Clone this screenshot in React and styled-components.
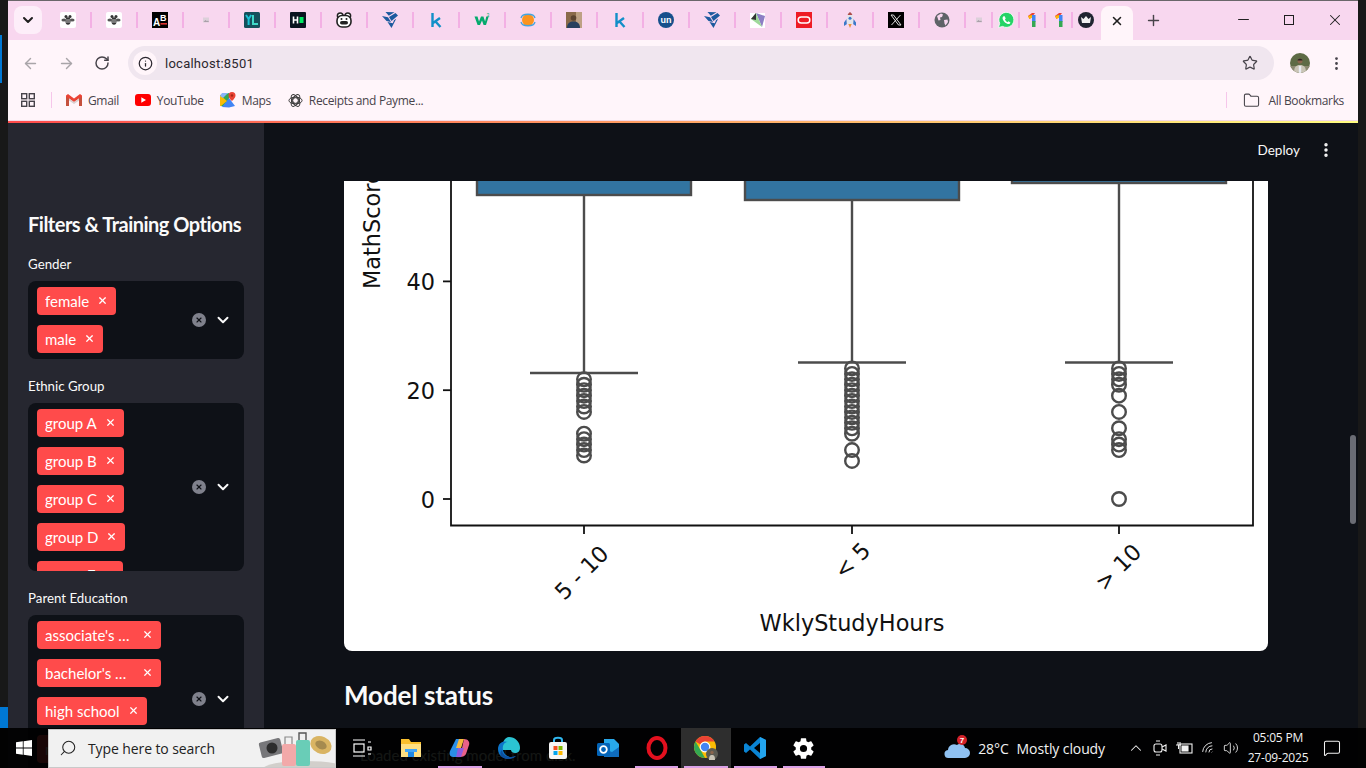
import { Fragment } from 'react'
import styled, { createGlobalStyle } from 'styled-components'
import { ArrowLeft, ArrowRight, RotateCw, Info, Star, EllipsisVertical, X, Plus, ChevronDown, ChevronUp, Search, Folder, Minus, MessageSquare, Volume2, Wifi } from 'lucide-react'
import { IoSettingsSharp } from 'react-icons/io5'

const GlobalStyle = createGlobalStyle`
    html, body {
        margin: 0;
        padding: 0;
        background: #141414;
        overflow: hidden;
    }
    * {
        box-sizing: border-box;
    }
`

const Desktop = styled.div`
    position: relative;
    display: flex;
    width: 1366px;
    height: 768px;
    overflow: hidden;
    background: #181818;
`

const DesktopEdge = styled.div`
    display: flex;
    flex-direction: column;
    justify-content: space-between;
    width: 8px;
    height: 728px;
    padding-top: 35px;
`

const EdgeMarkTop = styled.div`
    width: 2px;
    height: 48px;
    background: #0078d4;
`

const EdgeMarkBottom = styled.div`
    width: 8px;
    height: 21px;
    background: #0078d4;
`

const Window = styled.div`
    display: flex;
    flex-direction: column;
    width: 1350px;
    height: 768px;
`

const TabStrip = styled.div`
    display: flex;
    align-items: center;
    height: 40px;
    padding: 0 0 0 6px;
    background: #f8d7ef;
    border-top: 1px solid #6a666a;
`

const TabListButton = styled.div`
    display: flex;
    align-items: center;
    justify-content: center;
    width: 28px;
    height: 28px;
    margin: -2px 4px 0 0;
    border-radius: 8px;
    background: #fdeef9;
    color: #1f1f1f;
`

const PinnedTab = styled.div`
    display: flex;
    align-items: center;
    justify-content: center;
    flex: none;
    width: ${p => p.$width}px;
    height: 32px;
    margin-top: -2px;
`

const TabDivider = styled.div`
    flex: none;
    width: 2px;
    height: 16px;
    margin-top: -2px;
    background: #f3b0e4;
`

const ActiveTab = styled.div`
    display: flex;
    align-items: center;
    justify-content: center;
    width: 32px;
    height: 34px;
    margin: 5px 0 0 3px;
    padding-bottom: 5px;
    border-radius: 8px 8px 0 0;
    background: #fff5fa;
    color: #1f1f1f;
`

const NewTab = styled.div`
    display: flex;
    align-items: center;
    justify-content: center;
    width: 40px;
    color: #47434a;
`

const WindowControls = styled.div`
    display: flex;
    margin-left: auto;
    margin-top: -2px;
`

const WindowControl = styled.div`
    display: flex;
    align-items: center;
    justify-content: center;
    width: 46px;
    height: 30px;
    color: #1f1f1f;
`

const MaximizeBox = styled.div`
    width: 10px;
    height: 10px;
    border: 1px solid #1f1f1f;
`

const Toolbar = styled.div`
    display: flex;
    align-items: center;
    height: 40px;
    padding: 6px 0 0 4px;
    background: #fff5fa;
`

const NavButton = styled.div`
    display: flex;
    align-items: center;
    justify-content: center;
    width: 36px;
    height: 34px;
    margin-left: ${p => p.$shift || 0}px;
    color: ${p => (p.$off ? '#a9a5a9' : '#47434a')};
`

const Omnibox = styled.div`
    display: flex;
    align-items: center;
    width: 1146px;
    height: 34px;
    margin-left: 8px;
    padding: 0 16px 0 5px;
    border-radius: 17px;
    background: #f0e6ef;
`

const SiteInfo = styled.div`
    display: flex;
    align-items: center;
    justify-content: center;
    width: 24px;
    height: 24px;
    border-radius: 50%;
    background: #fff5fa;
    color: #2c2830;
`

const Address = styled.span`
    flex: 1;
    margin-left: 8px;
    font: 13px 'Roboto', sans-serif;
    letter-spacing: 0.25px;
    color: #2b272e;
`

const Avatar = styled.div`
    width: 20px;
    height: 20px;
    margin-left: 16px;
    border-radius: 50%;
    overflow: hidden;
`

const BookmarksBar = styled.div`
    display: flex;
    align-items: center;
    height: 40px;
    padding: 0 14px 0 13px;
    background: #fff5fa;
`

const BarDivider = styled.div`
    width: 1px;
    height: 16px;
    background: #f6c6ea;
    margin: ${p => p.$margin};
`

const Bookmark = styled.div`
    display: flex;
    align-items: center;
    gap: ${p => p.$gap || 6}px;
    margin-right: ${p => p.$after}px;
    font: 12px 'Open Sans', sans-serif;
    letter-spacing: -0.35px;
    color: #47434a;
    white-space: nowrap;
`

const PageLine = styled.div`
    flex: none;
    height: 3px;
    border-top: 1px solid #f2d9e6;
    background-clip: content-box;
    background-image: linear-gradient(90deg, #ff4b4b, #fffd80);
`

const AppFrame = styled.div`
    display: flex;
    flex: 1;
    min-height: 0;
`

const Sidebar = styled.aside`
    flex: none;
    width: 256px;
    padding: 89px 20px 0;
    background: #262730;
    overflow: hidden;
    font-family: 'Lato', sans-serif;
    color: #fafafa;
`

const SidebarTitle = styled.h2`
    margin: 0 0 19px;
    font-size: 20px;
    line-height: 24px;
    font-weight: 700;
    letter-spacing: -0.5px;
    white-space: nowrap;
`

const FilterLabel = styled.div`
    height: 18px;
    margin-bottom: 8px;
    font-size: 13.3px;
    line-height: 18px;
`

const SelectBox = styled.div`
    display: flex;
    align-items: center;
    max-height: 168px;
    margin-bottom: 18px;
    border-radius: 8px;
    background: #0e1117;
    overflow: hidden;
`

const TagList = styled.div`
    display: flex;
    flex: 1;
    flex-direction: column;
    align-items: flex-start;
    align-self: flex-start;
    gap: 10px;
    padding: 6px 9px;
`

const Tag = styled.span`
    display: flex;
    flex: none;
    align-items: center;
    gap: 8px;
    height: 28px;
    padding: 0 8px 1px;
    border-radius: 4px;
    background: #ff4b4b;
    font-size: 15px;
    color: #fff;
`

const TagText = styled.span`
    max-width: 89px;
    overflow: hidden;
    white-space: nowrap;
    text-overflow: ellipsis;
`

const SelectControls = styled.div`
    display: flex;
    flex: none;
    align-items: center;
    gap: 8px;
    padding-right: 12px;
    color: #fafafa;
`

const ClearBadge = styled.div`
    display: flex;
    align-items: center;
    justify-content: center;
    width: 14px;
    height: 14px;
    border-radius: 50%;
    background: #7f818c;
    color: #0e1117;
`

const Main = styled.main`
    position: relative;
    display: flex;
    flex: 1;
    flex-direction: column;
    min-width: 0;
    background: #0e1117;
    overflow: hidden;
    font-family: 'Lato', sans-serif;
    color: #fafafa;
`

const AppHeader = styled.header`
    display: flex;
    flex: none;
    align-items: center;
    justify-content: flex-end;
    gap: 17px;
    height: 58px;
    padding: 0 23px 4px 0;
    font-size: 13.5px;
`

const Content = styled.div`
    padding: 0 90px 0 80px;
`

const ChartCard = styled.div`
    height: 470px;
    border-radius: 0 0 8px 8px;
    background: #fff;
    overflow: hidden;
`

const ChartSvg = styled.svg`
    display: block;
    width: 924px;
    height: 470px;
    font-family: 'DejaVu Sans', sans-serif;
`

const SectionTitle = styled.h3`
    margin: 27px 0 26px;
    font-size: 26px;
    line-height: 34px;
    font-weight: 700;
    letter-spacing: -0.1px;
`

const StatusBox = styled.div`
    padding: 8px 16px;
    font-size: 15px;
    color: #c9dccc;
`

const ScrollThumb = styled.div`
    position: absolute;
    top: 312px;
    right: 2px;
    width: 6px;
    height: 89px;
    border-radius: 3px;
    background: #6a6c74;
`

const Taskbar = styled.footer`
    position: absolute;
    left: 0;
    right: 0;
    bottom: 0;
    display: flex;
    align-items: center;
    height: 40px;
    background: rgba(0, 0, 0, 0.9);
    color: #fff;
    font: 13px 'Open Sans', sans-serif;
`

const StartButton = styled.div`
    display: flex;
    align-items: center;
    justify-content: center;
    flex: none;
    width: 48px;
    height: 40px;
`

const SearchBox = styled.div`
    position: relative;
    display: flex;
    align-items: center;
    gap: 11px;
    flex: none;
    width: 288px;
    height: 39px;
    padding-left: 10px;
    background: #f1f1f1;
    border: 1px solid #c9c9c9;
    color: #222;
    font-size: 14px;
    letter-spacing: -0.1px;
    overflow: hidden;
`

const SearchArt = styled.svg`
    position: absolute;
    right: 0;
    top: 0;
`

const TaskIcons = styled.div`
    display: flex;
    flex: none;
    margin-left: 1px;
`

const TaskIcon = styled.div`
    position: relative;
    display: flex;
    align-items: center;
    justify-content: center;
    width: ${p => p.$w || 49.2}px;
    height: 40px;
    background: ${p => (p.$active ? '#2e2e2e' : 'transparent')};
    &::after {
        content: '';
        position: absolute;
        left: 3px;
        right: 3px;
        bottom: 0;
        height: 2px;
        background: ${p => (p.$open ? '#d9a0e6' : 'transparent')};
    }
`

const Tray = styled.div`
    display: flex;
    flex: 1;
    align-items: center;
    justify-content: flex-end;
    height: 40px;
    padding-right: 25px;
    color: #f2f2f2;
`

const WeatherText = styled.span`
    margin: ${p => p.$margin};
    font-size: 14px;
    letter-spacing: -0.1px;
    white-space: nowrap;
`

const TrayIcon = styled.div`
    display: flex;
    align-items: center;
    justify-content: center;
    width: ${p => p.$w || 24}px;
`

const Clock = styled.div`
    width: 70px;
    margin: 0 10px 0 1px;
    font-size: 12px;
    line-height: 20px;
    letter-spacing: -0.2px;
    text-align: center;
`

const tabSlots = ['bee', 'bee', 'ab', 'blank', 'yl', 'hn', 'pig', 'shard', 'k', 'w3', 'orb', 'photo', 'k', 'un', 'shard', 'prism', 'oracle', 'rocket', 'x', 'globe']
const narrowSlots = [['blank', 25], ['wa', 25], ['one', 24], ['one', 25], ['crown', 25]]

function Favicon({ kind }) {
    const box = { width: 16, height: 16, viewBox: '0 0 16 16' }
    switch (kind) {
        case 'bee':
            return (
                <svg {...box}>
                    <rect width="16" height="16" rx="2" fill="#fff" />
                    <circle cx="6" cy="4.500" r="1.500" fill="#333" />
                    <circle cx="10" cy="4.500" r="1.500" fill="#333" />
                    <ellipse cx="4" cy="8" rx="2.600" ry="1.600" fill="#555" />
                    <ellipse cx="12" cy="8" rx="2.600" ry="1.600" fill="#555" />
                    <ellipse cx="8" cy="9" rx="2.600" ry="3.800" fill="#333" />
                    <path d="M5.500 8h5M5.500 10h5" stroke="#fff" strokeWidth=".7" />
                </svg>
            )
        case 'ab':
            return (
                <svg {...box}>
                    <rect width="16" height="16" fill="#000" />
                    <text x="1" y="14" fontSize="10" fontWeight="700" fontFamily="Liberation Sans" fill="#fff">A</text>
                    <text x="8" y="9" fontSize="9" fontWeight="700" fontFamily="Liberation Sans" fill="#fff">B</text>
                    <rect x="8.500" y="11" width="6.500" height="1.600" fill="#e0322f" />
                </svg>
            )
        case 'blank':
            return (
                <svg {...box}>
                    <rect x="5" y="5.500" width="6" height="5" fill="#dcd0da" />
                    <path d="M5.500 10l2-2 1.500 1.200 1-.8 1 1.600z" fill="#a99ea8" />
                </svg>
            )
        case 'yl':
            return (
                <svg {...box}>
                    <rect width="16" height="16" rx="1.500" fill="#14505c" />
                    <path d="M2 3l2.600 4L7.200 3M4.600 7v6" stroke="#19c3d6" strokeWidth="2" fill="none" />
                    <path d="M9 3v9h5" stroke="#3fd9c8" strokeWidth="2" fill="none" />
                </svg>
            )
        case 'hn':
            return (
                <svg {...box}>
                    <rect width="16" height="16" rx="1" fill="#0a1420" />
                    <path d="M3.500 4.500v7M7.500 4.500v7M3.500 8h4" stroke="#fff" strokeWidth="1.600" />
                    <rect x="9.500" y="5" width="4" height="6" fill="#00ea64" />
                </svg>
            )
        case 'pig':
            return (
                <svg {...box}>
                    <circle cx="4.200" cy="3.800" r="2.800" fill="#fff" stroke="#222" strokeWidth="1.500" />
                    <circle cx="11.800" cy="3.800" r="2.800" fill="#fff" stroke="#222" strokeWidth="1.500" />
                    <rect x="1" y="3.500" width="14" height="11.500" rx="5" fill="#fff" stroke="#222" strokeWidth="1.600" />
                    <rect x="4" y="9" width="8" height="3.600" rx="1.800" fill="#222" />
                    <circle cx="5.500" cy="7" r="1" fill="#222" />
                    <circle cx="10.500" cy="7" r="1" fill="#222" />
                </svg>
            )
        case 'shard':
            return (
                <svg {...box}>
                    <path d="M3.500 0L12.500 .3 6.800 3.800zM13.500 1L16 3.500 9.500 9 7 5zM0 4l6 1.200L9 10 4.500 9zM5.500 10l5.300 1.300 1.200-3 2.200-1.500L9.500 16z" fill="#1c5a9e" />
                </svg>
            )
        case 'k':
            return (
                <svg {...box}>
                    <path d="M4.500 1v14M12 6L5 11M7.500 9.500L12.500 15" stroke="#128fc8" strokeWidth="2.400" fill="none" />
                </svg>
            )
        case 'w3':
            return (
                <svg {...box}>
                    <path d="M.5 4.500h3l1.500 5 2-5h2.400l1.700 5 1.200-5h2.400L12 13H9.600L8 8.500 6 13H3.600z" fill="#04aa6d" />
                    <text x="12.800" y="4.500" fontSize="4.500" fontFamily="Liberation Sans" fill="#04aa6d">3</text>
                </svg>
            )
        case 'orb':
            return (
                <svg {...box}>
                    <circle cx="8" cy="8" r="6" fill="#fb9420" />
                    <path d="M1 6C2 1 14 1 15 6M1 10c1 5 13 5 14 0" stroke="#45a4de" strokeWidth="1.300" fill="none" />
                </svg>
            )
        case 'photo':
            return (
                <svg {...box}>
                    <rect width="16" height="16" fill="#8a6a4a" />
                    <rect x="10" width="6" height="16" fill="#bda184" />
                    <circle cx="7.500" cy="6" r="2.800" fill="#5c4430" />
                    <path d="M1 16c0-5 3-6.500 6.500-6.500S14 11 14 16z" fill="#29405e" />
                </svg>
            )
        case 'un':
            return (
                <svg {...box}>
                    <circle cx="8" cy="8" r="8" fill="#17508c" />
                    <text x="8" y="11" textAnchor="middle" fontSize="9" fontWeight="700" fontFamily="Liberation Sans" fill="#fff">un</text>
                </svg>
            )
        case 'prism':
            return (
                <svg {...box}>
                    <rect y="1" width="15" height="15" fill="#fff" />
                    <path d="M6 1l9 3-3 11z" fill="#8d7fc4" />
                    <path d="M1 7l5-6 6 14z" fill="#9ed99a" />
                    <path d="M6 1L1 7l5 1z" fill="#333" />
                </svg>
            )
        case 'oracle':
            return (
                <svg {...box}>
                    <rect width="16" height="16" fill="#ee1c25" />
                    <rect x="2.200" y="5" width="11.600" height="6" rx="3" fill="none" stroke="#fff" strokeWidth="1.500" />
                </svg>
            )
        case 'rocket':
            return (
                <svg {...box}>
                    <path d="M4.500 7L2 10.500V14l3-2zM11.500 7L14 10.500V14l-3-2z" fill="#3a78c8" />
                    <path d="M8 0c2.500 1.500 3.200 4 3.200 6.500V12H4.800V6.500C4.800 4 5.500 1.500 8 0z" fill="#e4e4ea" />
                    <path d="M8 0c1.100.7 1.900 1.700 2.400 3H5.600C6.100 1.700 6.900.7 8 0z" fill="#b04a4a" />
                    <circle cx="8" cy="6.200" r="1.500" fill="#3a78c8" />
                    <path d="M6.300 12h3.400L8 16z" fill="#e9953a" />
                </svg>
            )
        case 'x':
            return (
                <svg {...box}>
                    <rect width="16" height="16" fill="#000" />
                    <path d="M3 3l7.500 10H13L5.500 3zM12.500 3L3.500 13" stroke="#ddd" strokeWidth="1" fill="none" />
                </svg>
            )
        case 'globe':
            return (
                <svg {...box}>
                    <circle cx="8" cy="8" r="7.500" fill="#5f6368" />
                    <path d="M3 4l4-2.500 2 1-1 2.500-2 .5.500 2.500-2 .5zM10 8l3.500-.5.500 2.500-2.500 3.500-1-2z" fill="#f8d7ef" />
                </svg>
            )
        case 'wa':
            return (
                <svg {...box}>
                    <path d="M.5 15.500l1.200-4.200A7.500 7.500 0 1 1 4.700 14.400z" fill="#25d366" stroke="#fff" strokeWidth=".8" />
                    <path d="M5.500 4.300c-1 .7-1.200 2-.5 3.500 1 2 2.800 3.700 4.700 4.200 1.300.3 2.400-.3 2.700-1.500l-2-1.200-1 .9c-1-.4-2-1.400-2.500-2.600l.8-1-1-2.300z" fill="#fff" />
                </svg>
            )
        case 'one':
            return (
                <svg {...box}>
                    <path d="M11 1H8L4 4l1.500 3L8 5z" fill="#ea4335" />
                    <path d="M4 4l1.500 3L8 5.500V3z" fill="#fbbc04" />
                    <rect x="8" y="3" width="3.500" height="7" fill="#4285f4" />
                    <rect x="8" y="9" width="3.500" height="6" fill="#34a853" />
                </svg>
            )
        case 'crown':
            return (
                <svg {...box}>
                    <circle cx="8" cy="8" r="8" fill="#1f2430" />
                    <path d="M3 5l2.500 2L8 4l2.500 3L13 5l-1 6H4z" fill="#f1f1f1" />
                </svg>
            )
        default:
            return null
    }
}

function GmailIcon() {
    return (
        <svg width="16" height="12" viewBox="0 0 16 12">
            <path d="M0 1.500V12h3V4.500L8 8l5-3.500V12h3V1.500L14 0 8 4.500 2 0z" fill="#ea4335" />
            <path d="M0 3v9h3V4.500z" fill="#c5503d" />
            <path d="M13 4.500V12h3V3z" fill="#c5503d" />
            <path d="M3 4.500L8 8l5-3.500v2L8 10 3 6.500z" fill="#d9d0d0" />
        </svg>
    )
}

function YoutubeIcon() {
    return (
        <svg width="16" height="12" viewBox="0 0 16 12">
            <rect width="16" height="12" rx="3" fill="#f00" />
            <path d="M6.300 3.300L11 6 6.300 8.700z" fill="#fff" />
        </svg>
    )
}

function MapsIcon() {
    return (
        <svg width="16" height="16" viewBox="0 0 16 16">
            <path d="M0 3l9-2v14l-9-1z" fill="#34a853" />
            <path d="M9 6l6 8-6 1.500L2 15z" fill="#4285f4" />
            <path d="M0 3l7 6-6 5H0z" fill="#fbbc04" />
            <path d="M2 1h6l-5 5-3-2z" fill="#8ab4f8" />
            <path d="M12 0a3.500 3.500 0 0 1 3.500 3.500C15.500 6 12 9 12 9S8.500 6 8.500 3.500A3.500 3.500 0 0 1 12 0z" fill="#ea4335" />
            <circle cx="12" cy="3.500" r="1.200" fill="#a52714" />
        </svg>
    )
}

function ChatGptIcon() {
    return (
        <svg width="15" height="15" viewBox="0 0 16 16" fill="none" stroke="#333" strokeWidth="1">
            <circle cx="8" cy="8" r="3" />
            <ellipse cx="8" cy="8" rx="7" ry="3.600" />
            <ellipse cx="8" cy="8" rx="7" ry="3.600" transform="rotate(60 8 8)" />
            <ellipse cx="8" cy="8" rx="7" ry="3.600" transform="rotate(120 8 8)" />
        </svg>
    )
}

function AppsGrid() {
    return (
        <svg width="14" height="14" viewBox="0 0 14 14" fill="none" stroke="#47434a" strokeWidth="1.400">
            <rect x=".7" y=".7" width="5" height="5" />
            <rect x="8.300" y=".7" width="5" height="5" />
            <rect x=".7" y="8.300" width="5" height="5" />
            <rect x="8.300" y="8.300" width="5" height="5" />
        </svg>
    )
}

function ProfilePhoto() {
    return (
        <svg width="20" height="20" viewBox="0 0 20 20">
            <rect width="20" height="20" fill="#5e6b45" />
            <rect y="13" width="20" height="7" fill="#8d8a72" />
            <path d="M4 20c0-6 2-8 6-8s6 2 6 8z" fill="#c9c4b5" />
            <rect x="8.800" y="13" width="2.400" height="7" fill="#e8ecf2" />
            <circle cx="10" cy="8" r="2.500" fill="#8a664d" />
            <path d="M7.500 7.500C7.500 5 12.500 5 12.500 7.500z" fill="#2a2320" />
        </svg>
    )
}

const CHART_BLUE = '#3274a1'
const CHART_LINE = '#4c4c4c'
const CHART_FONT = 22.4
const scoreY = v => 499 - v * 5.44

const boxes = [
    { x: 584, bottom: 195, cap: 373, fliers: [22, 21, 20, 19, 18, 17, 16, 12, 11, 10, 9, 8] },
    { x: 852, bottom: 200, cap: 362.5, fliers: [24, 23, 22, 21, 20, 19, 18, 17, 16, 15, 14, 13, 12, 9, 7] },
    { x: 1119, bottom: 183, cap: 362.5, fliers: [24, 23, 22, 21, 19, 16, 13, 11, 10, 9, 0] },
]

const xLabels = [
    { text: '5 - 10', cx: 581.5, cy: 572.5 },
    { text: '< 5', cx: 852, cy: 560.5 },
    { text: '> 10', cx: 1118, cy: 567 },
]

function BoxPlot() {
    return (
        <ChartSvg viewBox="344 181 924 470" fontSize={CHART_FONT} fill="#111">
            <text x="380" y="289" transform="rotate(-90 380 289)">MathScore</text>
            {[60, 40, 20, 0].map(v => (
                <g key={v}>
                    <line x1="443" x2="451" y1={scoreY(v)} y2={scoreY(v)} stroke="#111" strokeWidth="1.800" />
                    <text x="435" y={scoreY(v) + 8.500} textAnchor="end">{v}</text>
                </g>
            ))}
            {boxes.map(b => (
                <g key={b.x} fill="none" stroke={CHART_LINE} strokeWidth="2.400">
                    <rect x={b.x - 107} y="120" width="214" height={b.bottom - 120} fill={CHART_BLUE} />
                    <line x1={b.x} x2={b.x} y1={b.bottom} y2={b.cap} />
                    <line x1={b.x - 54} x2={b.x + 54} y1={b.cap} y2={b.cap} />
                    {b.fliers.map(v => (
                        <circle key={v} cx={b.x} cy={scoreY(v)} r="6.800" />
                    ))}
                    <line x1={b.x} x2={b.x} y1="526" y2="534" stroke="#111" strokeWidth="1.800" />
                </g>
            ))}
            <path d="M451 120V525.500H1253V120" fill="none" stroke="#111" strokeWidth="1.800" />
            {xLabels.map(l => (
                <text key={l.text} x={l.cx} y={l.cy + 8} textAnchor="middle" transform={`rotate(-45 ${l.cx} ${l.cy})`}>{l.text}</text>
            ))}
            <text x="852" y="631" textAnchor="middle">WklyStudyHours</text>
        </ChartSvg>
    )
}

function MultiSelect({ label, options }) {
    return (
        <>
            <FilterLabel>{label}</FilterLabel>
            <SelectBox>
                <TagList>
                    {options.map(option => (
                        <Tag key={option}>
                            <TagText>{option}</TagText>
                            <X size={11} strokeWidth={2.600} />
                        </Tag>
                    ))}
                </TagList>
                <SelectControls>
                    <ClearBadge><X size={8} strokeWidth={3.400} /></ClearBadge>
                    <ChevronDown size={18} strokeWidth={2.600} />
                </SelectControls>
            </SelectBox>
        </>
    )
}

function WindowsLogo() {
    return (
        <svg width="16" height="16" viewBox="0 0 16 16" fill="#fff">
            <path d="M0 2.300L6.800 1.300V7.600H0zM7.600 1.200L16 0V7.600H7.600zM0 8.400H6.800V14.700L0 13.700zM7.600 8.400H16V16L7.600 14.800z" />
        </svg>
    )
}

function TravelArt() {
    return (
        <SearchArt width="82" height="39" viewBox="0 0 82 39">
            <ellipse cx="52" cy="39" rx="42" ry="8" fill="#d2cfcb" />
            <rect x="7" y="10" width="22" height="16" rx="2" transform="rotate(-14 18 18)" fill="#77777a" />
            <circle cx="19" cy="18" r="5.500" fill="#2d2d2d" />
            <rect x="29" y="14" width="14" height="22" rx="2" fill="#f2a9a9" />
            <path d="M32 14V7h7v7" stroke="#8a8a8a" strokeWidth="1.200" fill="none" />
            <rect x="43" y="10" width="14" height="26" rx="2" fill="#69cdb7" />
            <path d="M46 10V3h7v7" stroke="#555" strokeWidth="1.400" fill="none" />
            <ellipse cx="68" cy="15" rx="11" ry="8.500" transform="rotate(25 68 15)" fill="#d9b463" />
            <ellipse cx="68" cy="15" rx="6" ry="4" transform="rotate(25 68 15)" fill="#a58a4f" />
        </SearchArt>
    )
}

function AppGlyph({ kind }) {
    const box = { width: 24, height: 24, viewBox: '0 0 24 24' }
    switch (kind) {
        case 'taskview':
            return (
                <svg {...box} fill="none" stroke="#fff" strokeWidth="1.200">
                    <path d="M3 4h12M3 20h12" />
                    <rect x="4" y="8" width="10" height="8" />
                    <path d="M18 6h3M18 11h3v3h-3zM18 18h3" />
                </svg>
            )
        case 'explorer':
            return (
                <svg {...box}>
                    <path d="M2 3h8l2 3h10v15H2z" fill="#fbc02d" />
                    <rect x="2" y="8" width="20" height="13" fill="#ffe082" />
                    <rect x="9" y="13" width="6" height="8" fill="#1e88e5" />
                    <rect x="6" y="13" width="12" height="3" fill="#42a5f5" />
                </svg>
            )
        case 'copilot':
            return (
                <svg {...box}>
                    <path d="M8 3h7l-4 18H5C2 21 1 18 2 15z" fill="#2a8fe8" />
                    <path d="M16 3c4 0 6 3 5 6l-3 9c-1 2-3 3-6 3z" fill="#e9618a" />
                    <path d="M11 3h5l-3 9H8z" fill="#f5b83d" />
                    <path d="M10 12h6l-3 9H8z" fill="#8f5be0" />
                </svg>
            )
        case 'edge':
            return (
                <svg {...box}>
                    <path d="M12 1a11 11 0 0 1 11 11c0 3-2 5-5 5-2 0-4-1-4-3h-9C5 6 8 1 12 1z" fill="#2bc3d2" />
                    <path d="M1 13C1 7 6 4 11 6c-4 0-6 4-5 8 1 5 7 9 13 6-6 5-18 3-18-7z" fill="#0c74c9" />
                    <path d="M5 14c0 5 6 9 14 6-2 2-5 3-8 3-6 0-10-5-6-9z" fill="#0d4f9e" />
                </svg>
            )
        case 'store':
            return (
                <svg {...box}>
                    <path d="M8 7V4c0-3 8-3 8 0v3" stroke="#30b8f0" strokeWidth="2" fill="none" />
                    <rect x="3" y="6" width="18" height="17" rx="2" fill="#f5f5f5" />
                    <rect x="7.500" y="10" width="4" height="4" fill="#f25022" />
                    <rect x="12.500" y="10" width="4" height="4" fill="#7fba00" />
                    <rect x="7.500" y="15" width="4" height="4" fill="#00a4ef" />
                    <rect x="12.500" y="15" width="4" height="4" fill="#ffb900" />
                </svg>
            )
        case 'outlook':
            return (
                <svg {...box}>
                    <path d="M8 3h10l5 5v11H8z" fill="#28a8ea" />
                    <path d="M8 13l8 3 7-5v10H8z" fill="#0f6cbd" />
                    <rect x="1" y="7" width="13" height="13" rx="1.500" fill="#0364b8" />
                    <circle cx="7.500" cy="13.500" r="3.300" fill="none" stroke="#fff" strokeWidth="1.800" />
                </svg>
            )
        case 'opera':
            return (
                <svg {...box}>
                    <ellipse cx="12" cy="12" rx="8.500" ry="10" fill="none" stroke="#e3101e" strokeWidth="4" />
                </svg>
            )
        case 'chrome':
            return (
                <svg {...box}>
                    <circle cx="11" cy="11" r="11" fill="#fbbc04" />
                    <path d="M11 0a11 11 0 0 1 9.500 5.500H11a5.500 5.500 0 0 0-4.800 2.800L1.500 5.500A11 11 0 0 1 11 0z" fill="#ea4335" />
                    <path d="M1.500 5.500l5 8.500 4.500 8A11 11 0 0 1 1.500 5.500z" fill="#34a853" />
                    <circle cx="11" cy="11" r="4.800" fill="#4285f4" stroke="#fff" strokeWidth="1.200" />
                    <circle cx="18" cy="18" r="6" fill="#5b5b52" />
                    <path d="M15 24c0-4 1-5 3-5s3 1 3 5z" fill="#c9c4b5" />
                    <circle cx="18" cy="16.500" r="1.700" fill="#8a664d" />
                </svg>
            )
        case 'vscode':
            return (
                <svg {...box}>
                    <path d="M17 1l6 3v16l-6 3-10-9.500L3 17l-2-1.500V8.500L3 7l4 3.500z" fill="#0a84d4" />
                    <path d="M17 7l-6 5 6 5z" fill="#000" />
                    <path d="M17 1l6 3v16l-6 3z" fill="#23a4ee" />
                </svg>
            )
        default:
            return null
    }
}

function App() {
    return (
        <Desktop>
            <GlobalStyle />
            <DesktopEdge>
                <EdgeMarkTop />
                <EdgeMarkBottom />
            </DesktopEdge>
            <Window>
                <TabStrip>
                    <TabListButton><ChevronDown size={16} strokeWidth={3} /></TabListButton>
                    {tabSlots.map((kind, i) => (
                        <Fragment key={i}>
                            <PinnedTab $width={44}><Favicon kind={kind} /></PinnedTab>
                            <TabDivider />
                        </Fragment>
                    ))}
                    {narrowSlots.map(([kind, width], i) => (
                        <Fragment key={i}>
                            <PinnedTab $width={width}><Favicon kind={kind} /></PinnedTab>
                            {i < 4 && <TabDivider />}
                        </Fragment>
                    ))}
                    <ActiveTab><X size={14} strokeWidth={2.600} /></ActiveTab>
                    <NewTab><Plus size={17} strokeWidth={2} /></NewTab>
                    <WindowControls>
                        <WindowControl><Minus size={17} strokeWidth={1.400} /></WindowControl>
                        <WindowControl><MaximizeBox /></WindowControl>
                        <WindowControl><X size={18} strokeWidth={1.400} /></WindowControl>
                    </WindowControls>
                </TabStrip>
                <Toolbar>
                    <NavButton $off><ArrowLeft size={17} /></NavButton>
                    <NavButton $off><ArrowRight size={17} /></NavButton>
                    <NavButton><RotateCw size={16} strokeWidth={2.200} /></NavButton>
                    <Omnibox>
                        <SiteInfo><Info size={15} /></SiteInfo>
                        <Address>localhost:8501</Address>
                        <Star size={16} color="#47434a" strokeWidth={1.800} />
                    </Omnibox>
                    <Avatar><ProfilePhoto /></Avatar>
                    <NavButton $shift={8}><EllipsisVertical size={17} /></NavButton>
                </Toolbar>
                <BookmarksBar>
                    <AppsGrid />
                    <BarDivider $margin="0 14px 0 16px" />
                    <Bookmark $after={16}><GmailIcon />Gmail</Bookmark>
                    <Bookmark $after={16}><YoutubeIcon />YouTube</Bookmark>
                    <Bookmark $after={17}><MapsIcon />Maps</Bookmark>
                    <Bookmark $after={0}><ChatGptIcon />Receipts and Payme...</Bookmark>
                    <BarDivider $margin="0 16px 0 auto" />
                    <Bookmark $after={0} $gap={9}><Folder size={17} strokeWidth={1.500} />All Bookmarks</Bookmark>
                </BookmarksBar>
                <PageLine />
                <AppFrame>
                    <Sidebar>
                        <SidebarTitle>Filters &amp; Training Options</SidebarTitle>
                        <MultiSelect label="Gender" options={['female', 'male']} />
                        <MultiSelect label="Ethnic Group" options={['group A', 'group B', 'group C', 'group D', 'group E']} />
                        <MultiSelect
                            label="Parent Education"
                            options={["associate's degree", "bachelor's degree", 'high school', "master's degree", 'some college']}
                        />
                    </Sidebar>
                    <Main>
                        <AppHeader>
                            <span>Deploy</span>
                            <EllipsisVertical size={18} strokeWidth={2.600} />
                        </AppHeader>
                        <Content>
                            <ChartCard><BoxPlot /></ChartCard>
                            <SectionTitle>Model status</SectionTitle>
                            <StatusBox>Loaded existing model from disk.</StatusBox>
                        </Content>
                        <ScrollThumb />
                    </Main>
                </AppFrame>
            </Window>
            <Taskbar>
                <StartButton><WindowsLogo /></StartButton>
                <SearchBox>
                    <Search size={18} strokeWidth={1.400} style={{ transform: 'scaleX(-1)' }} />
                    <span>Type here to search</span>
                    <TravelArt />
                </SearchBox>
                <TaskIcons>
                    <TaskIcon><AppGlyph kind="taskview" /></TaskIcon>
                    <TaskIcon><AppGlyph kind="explorer" /></TaskIcon>
                    <TaskIcon $open><AppGlyph kind="copilot" /></TaskIcon>
                    <TaskIcon><AppGlyph kind="edge" /></TaskIcon>
                    <TaskIcon><AppGlyph kind="store" /></TaskIcon>
                    <TaskIcon><AppGlyph kind="outlook" /></TaskIcon>
                    <TaskIcon $open><AppGlyph kind="opera" /></TaskIcon>
                    <TaskIcon $active $open><AppGlyph kind="chrome" /></TaskIcon>
                    <TaskIcon $open><AppGlyph kind="vscode" /></TaskIcon>
                    <TaskIcon $open $w={48}><IoSettingsSharp size={23} color="#fff" /></TaskIcon>
                </TaskIcons>
                <Tray>
                    <svg width="26" height="26" viewBox="0 0 26 26">
                        <path d="M5 23a4 4 0 0 1-1-8 6 6 0 0 1 9-5 5 5 0 0 1 8 3 5 5 0 0 1 0 10z" fill="#8fc1f2" />
                        <circle cx="18" cy="5" r="5" fill="#d3222a" />
                        <text x="18" y="8" textAnchor="middle" fontSize="8" fill="#fff" fontFamily="Liberation Sans" fontWeight="700">7</text>
                    </svg>
                    <WeatherText $margin="0 0 0 8px">28°C</WeatherText>
                    <WeatherText $margin="0 19px 0 8px">Mostly cloudy</WeatherText>
                    <TrayIcon><ChevronUp size={18} strokeWidth={1.400} /></TrayIcon>
                    <TrayIcon>
                        <svg width="14" height="16" viewBox="0 0 14 16" fill="none" stroke="#f2f2f2" strokeWidth="1.100">
                            <rect x="1" y="4" width="8" height="8" rx="2" />
                            <path d="M9 7l4-2v6l-4-2M3 1h4M3 15h4" />
                        </svg>
                    </TrayIcon>
                    <TrayIcon>
                        <svg width="18" height="14" viewBox="0 0 18 14" fill="none" stroke="#f2f2f2" strokeWidth="1.100">
                            <rect x="5" y="3" width="12" height="9" />
                            <rect x="7" y="5" width="6" height="5" fill="#f2f2f2" />
                            <path d="M1 4h5M3 1v3M5 1v3M3.500 4v4" />
                        </svg>
                    </TrayIcon>
                    <TrayIcon><Wifi size={15} strokeWidth={1.400} style={{ transform: 'rotate(-45deg)' }} /></TrayIcon>
                    <TrayIcon $w={22}><Volume2 size={16} strokeWidth={1.300} /></TrayIcon>
                    <Clock>05:05 PM<br />27-09-2025</Clock>
                    <MessageSquare size={18} strokeWidth={1.400} />
                </Tray>
            </Taskbar>
        </Desktop>
    )
}

export default App
